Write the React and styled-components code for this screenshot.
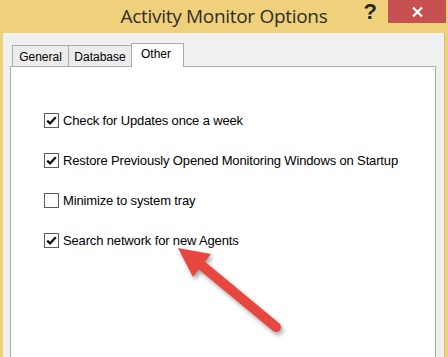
import styled, { createGlobalStyle } from 'styled-components'

const GlobalStyle = createGlobalStyle`
  html, body {
    margin: 0;
    padding: 0;
    background: #efd07b;
  }
`

const Window = styled.div`
  position: relative;
  width: 448px;
  height: 357px;
  background: #efd07b;
  display: flex;
  flex-direction: column;
  overflow: hidden;
  font-family: "Liberation Sans", Arial, sans-serif;
`

const TitleBar = styled.div`
  height: 33px;
  display: grid;
  grid-template-columns: 1fr auto 1fr;
  align-items: start;
`

const Title = styled.div`
  grid-column: 2;
  padding-top: 6px;
  font-family: "Open Sans", "Noto Sans", sans-serif;
  font-size: 19px;
  letter-spacing: -0.3px;
  line-height: 20px;
  color: #2e2e2e;
  white-space: nowrap;
`

const Controls = styled.div`
  grid-column: 3;
  justify-self: end;
  display: flex;
  align-items: flex-start;
  gap: 11px;
  margin-right: 2px;
`

const HelpButton = styled.div`
  font-family: "Liberation Sans", Arial, sans-serif;
  font-weight: 700;
  font-size: 22px;
  line-height: 22px;
  color: #262626;
  padding-top: 1px;
`

const CloseButton = styled.div`
  width: 58px;
  height: 23px;
  background: #c75050;
  display: flex;
  align-items: center;
  justify-content: center;
`

const Client = styled.div`
  flex: 1;
  margin-left: 3px;
  margin-right: 3px;
  background: #f0f0f0;
  border-right: 1px solid #d8bd70;
  padding: 10px 8px 0 7px;
  display: flex;
  flex-direction: column;
`

const TabStrip = styled.div`
  height: 23px;
  display: flex;
  align-items: flex-end;
  padding-left: 2px;
  position: relative;
  z-index: 1;
`

const Tab = styled.div`
  box-sizing: border-box;
  width: ${p => p.$w}px;
  height: ${p => (p.$active ? 24 : 21)}px;
  margin-left: ${p => (p.$first ? 0 : -1)}px;
  margin-bottom: ${p => (p.$active ? -1 : 0)}px;
  padding-top: ${p => (p.$active ? 3 : 4)}px;
  border: 1px solid #acacac;
  border-bottom: none;
  background: ${p => (p.$active ? '#ffffff' : '#ececec')};
  font-size: 12px;
  line-height: 14px;
  color: #000;
  text-align: center;
  padding-right: ${p => (p.$active ? 3 : 0)}px;
`

const Panel = styled.div`
  flex: 1;
  background: #ffffff;
  border: 1px solid #acacac;
  border-bottom: none;
  padding: 43px 0 0 33px;
  display: flex;
  flex-direction: column;
  gap: 20px;
`

const OptionRow = styled.label`
  height: 20px;
  display: flex;
  align-items: center;
  gap: 4px;
  font-size: 13px;
  letter-spacing: -0.15px;
  color: #000;
  white-space: nowrap;
`

const Box = styled.span`
  box-sizing: border-box;
  width: 15px;
  height: 15px;
  border: 1px solid #5c5c5c;
  background: #fff;
  display: flex;
  align-items: center;
  justify-content: center;
  flex-shrink: 0;
`

const Overlay = styled.svg`
  position: absolute;
  left: 0;
  top: 0;
  pointer-events: none;
  filter: drop-shadow(2px 3px 2px rgba(0, 0, 0, 0.35));
`

function CheckBox({ checked }) {
  return (
    <Box>
      {checked && (
        <svg width="13" height="13" viewBox="0 0 13 13">
          <path d="M2.2 6.6 L5 9.4 L10.8 3.2" fill="none" stroke="#111" strokeWidth="2.3" />
        </svg>
      )}
    </Box>
  )
}

const options = [
  { label: 'Check for Updates once a week', checked: true },
  { label: 'Restore Previously Opened Monitoring Windows on Startup', checked: true },
  { label: 'Minimize to system tray', checked: false },
  { label: 'Search network for new Agents', checked: true },
]

export default function App() {
  return (
    <>
      <GlobalStyle />
      <Window>
        <TitleBar>
          <Title>Activity Monitor Options</Title>
          <Controls>
            <HelpButton>?</HelpButton>
            <CloseButton>
              <svg width="11" height="10" viewBox="0 0 11 10">
                <path d="M1 0.5 L10 9.5 M10 0.5 L1 9.5" stroke="#fff" strokeWidth="2.2" />
              </svg>
            </CloseButton>
          </Controls>
        </TitleBar>
        <Client>
          <TabStrip>
            <Tab $first $w={57}>General</Tab>
            <Tab $w={64}>Database</Tab>
            <Tab $active $w={53}>Other</Tab>
          </TabStrip>
          <Panel>
            {options.map(o => (
              <OptionRow key={o.label}>
                <CheckBox checked={o.checked} />
                <span>{o.label}</span>
              </OptionRow>
            ))}
          </Panel>
        </Client>
        <Overlay width="448" height="357" viewBox="0 0 448 357">
          <line x1="276" y1="327" x2="200" y2="264" stroke="#e8473f" strokeWidth="10" strokeLinecap="round" />
          <polygon points="178,248 211,254 193,277" fill="#e8473f" />
        </Overlay>
      </Window>
    </>
  )
}
